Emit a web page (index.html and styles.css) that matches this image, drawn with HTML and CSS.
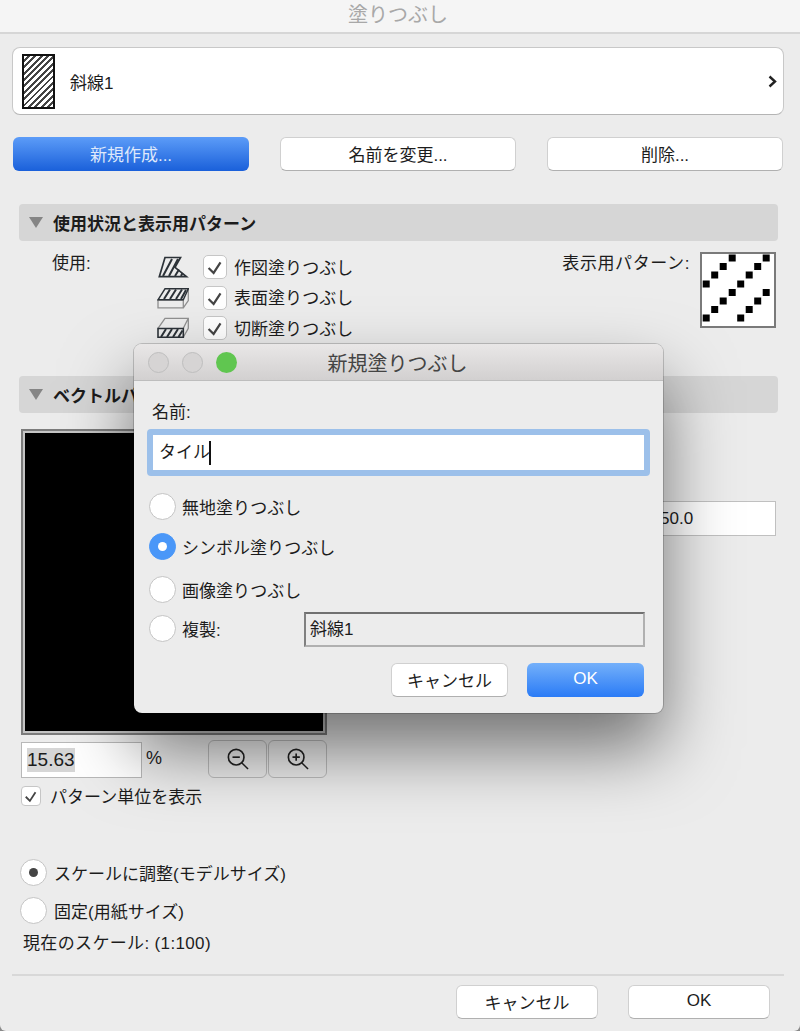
FILE: index.html
```html
<!DOCTYPE html>
<html lang="ja">

<head>
    <meta charset="UTF-8">
    <meta name="viewport" content="width=device-width, initial-scale=1.0">
    <title>塗りつぶし</title>
    <link rel="stylesheet" href="styles.css">
</head>

<body>

    <svg class="defs" width="0" height="0">
        <symbol id="tick" viewBox="0 0 24 24">
            <path d="M5 13 L10.5 18.5 L18 7" fill="none" stroke="#444" stroke-width="2.4" />
        </symbol>
        <symbol id="triangle" viewBox="0 0 14 11">
            <polygon points="0,0 14,0 7,11" fill="#858585" />
        </symbol>
    </svg>

    <div class="window">

        <div class="titlebar">塗りつぶし</div>

        <div class="picker">
            <div class="picker-swatch"></div>
            <span class="picker-name">斜線1</span>
            <svg class="picker-arrow" width="9" height="13" viewBox="0 0 9 13">
                <path d="M1.5 1.5 L7 6.5 L1.5 11.5" fill="none" stroke="#222" stroke-width="2.4" />
            </svg>
        </div>

        <div class="actions">
            <button class="btn btn-primary">新規作成...</button>
            <button class="btn">名前を変更...</button>
            <button class="btn">削除...</button>
        </div>

        <div class="section-head">
            <svg class="section-arrow"><use href="#triangle" /></svg>
            <span>使用状況と表示用パターン</span>
        </div>

        <div class="usage">
            <div class="usage-label">使用:</div>
            <div class="usage-list">
                <div class="usage-row">
                    <svg class="usage-icon" viewBox="0 0 32 22">
                        <path d="M8 1.5 H23.5 L18 11.3 L29.5 20.7 H2.3 Z" fill="none" stroke="#2c3238" stroke-width="1.7" />
                        <path d="M6 20 L15 3 M12 20 L21 3 M18 20 L22 13.5 M24 20 L25.5 17" stroke="#2c3238" stroke-width="2" />
                    </svg>
                    <span class="check"><svg><use href="#tick" /></svg></span>
                    <span class="usage-text">作図塗りつぶし</span>
                </div>
                <div class="usage-row">
                    <svg class="usage-icon" viewBox="0 0 32 22">
                        <path d="M1 13 H26.3 V20.8 H1 Z M26.3 20.8 L31.3 13.5 V2" fill="none" stroke="#909090" stroke-width="1.3" />
                        <path d="M1 12.8 L8 1.8 H31.3 L26.3 12.8 Z" fill="none" stroke="#2c3238" stroke-width="1.4" />
                        <path d="M7 12 L13 2.5 M13 12 L19 2.5 M19 12 L25 2.5 M24 12 L29 3" stroke="#2c3238" stroke-width="2" />
                    </svg>
                    <span class="check"><svg><use href="#tick" /></svg></span>
                    <span class="usage-text">表面塗りつぶし</span>
                </div>
                <div class="usage-row">
                    <svg class="usage-icon" viewBox="0 0 32 22">
                        <path d="M1 11.3 L8 1.3 H31.3 V11.3 L26.3 20.3 M26.3 11.3 L31.3 1.3" fill="none" stroke="#909090" stroke-width="1.3" />
                        <path d="M1 11.5 H26.3 V20.3 H1 Z" fill="none" stroke="#2c3238" stroke-width="1.6" />
                        <path d="M4 20 L9 12 M10 20 L15 12 M16 20 L21 12 M21.5 20 L25.5 13.5" stroke="#2c3238" stroke-width="2" />
                    </svg>
                    <span class="check"><svg><use href="#tick" /></svg></span>
                    <span class="usage-text">切断塗りつぶし</span>
                </div>
            </div>
            <div class="usage-pattern">
                <span class="pattern-label">表示用パターン:</span>
                <svg class="pattern-box" viewBox="0 0 72 72">
                    <g transform="translate(-1.3 -1.5)">
                        <rect x="2" y="62" width="7" height="7" />
                        <rect x="10.5" y="53.5" width="7" height="7" />
                        <rect x="19" y="45" width="7" height="7" />
                        <rect x="28" y="36.5" width="7" height="7" />
                        <rect x="36.5" y="62" width="7" height="7" />
                        <rect x="45" y="53.5" width="7" height="7" />
                        <rect x="53.5" y="45" width="7" height="7" />
                        <rect x="62" y="36.5" width="7" height="7" />
                        <rect x="2" y="28" width="7" height="7" />
                        <rect x="10.5" y="19" width="7" height="7" />
                        <rect x="19" y="10.5" width="7" height="7" />
                        <rect x="28" y="2" width="7" height="7" />
                        <rect x="36.5" y="28" width="7" height="7" />
                        <rect x="45" y="19" width="7" height="7" />
                        <rect x="53.5" y="10.5" width="7" height="7" />
                        <rect x="62" y="2" width="7" height="7" />
                    </g>
                </svg>
            </div>
        </div>

        <div class="section-head">
            <svg class="section-arrow"><use href="#triangle" /></svg>
            <span>ベクトルパターン</span>
        </div>

        <div class="vector">
            <div class="vector-left">
                <div class="canvas"></div>
                <div class="zoom-row">
                    <div class="zoom-input"><span class="selected">15.63</span></div>
                    <span class="zoom-unit">%</span>
                    <div class="zoom-buttons">
                        <button class="zoom-btn">
                            <svg width="22" height="22" viewBox="0 0 24 24">
                                <circle cx="10" cy="10" r="8.5" fill="none" stroke="#222" stroke-width="1.8" />
                                <path d="M6 10 H14" stroke="#222" stroke-width="1.8" />
                                <path d="M16 16 L23 23" stroke="#222" stroke-width="1.6" />
                            </svg>
                        </button>
                        <button class="zoom-btn">
                            <svg width="22" height="22" viewBox="0 0 24 24">
                                <circle cx="10" cy="10" r="8.5" fill="none" stroke="#222" stroke-width="1.8" />
                                <path d="M6 10 H14 M10 6 V14" stroke="#222" stroke-width="1.8" />
                                <path d="M16 16 L23 23" stroke="#222" stroke-width="1.6" />
                            </svg>
                        </button>
                    </div>
                </div>
                <div class="unit-row">
                    <span class="check check-small"><svg><use href="#tick" /></svg></span>
                    <span>パターン単位を表示</span>
                </div>
            </div>
            <div class="vector-value">50.0</div>
        </div>

        <div class="scale">
            <div class="scale-row">
                <span class="radio radio-dark"></span>
                <span>スケールに調整(モデルサイズ)</span>
            </div>
            <div class="scale-row">
                <span class="radio"></span>
                <span>固定(用紙サイズ)</span>
            </div>
            <div class="scale-now">現在のスケール: (1:100)</div>
        </div>

        <div class="footer">
            <button class="btn btn-footer">キャンセル</button>
            <button class="btn btn-footer">OK</button>
        </div>

    </div>

    <div class="modal">
        <div class="modal-title">
            <span class="light"></span>
            <span class="light"></span>
            <span class="light light-green"></span>
            <span class="modal-caption">新規塗りつぶし</span>
        </div>
        <div class="modal-body">
            <div class="modal-label">名前:</div>
            <div class="name-field">タイル<span class="caret"></span></div>

            <div class="modal-options">
                <div class="option">
                    <span class="radio"></span>
                    <span>無地塗りつぶし</span>
                </div>
                <div class="option">
                    <span class="radio radio-blue"></span>
                    <span>シンボル塗りつぶし</span>
                </div>
                <div class="option option-image">
                    <span class="radio"></span>
                    <span>画像塗りつぶし</span>
                </div>
                <div class="option option-copy">
                    <span class="radio"></span>
                    <span class="copy-label">複製:</span>
                    <div class="copy-field">斜線1</div>
                </div>
            </div>

            <div class="modal-buttons">
                <button class="btn btn-modal">キャンセル</button>
                <button class="btn btn-modal btn-ok">OK</button>
            </div>
        </div>
    </div>

</body>

</html>
```

FILE: styles.css
```css
* {
    box-sizing: border-box;
}

body {
    margin: 0;
    background-color: #8a8a8a;
    font-family: "Liberation Sans", "Noto Sans CJK JP", sans-serif;
    font-size: 17px;
    color: #1c1c1c;
    overflow: hidden;
}

.defs {
    position: absolute;
}

.window {
    width: 800px;
    height: 1031px;
    background-color: #ececec;
    border-radius: 0 0 6px 6px;
    overflow: hidden;
}

.titlebar {
    height: 34px;
    padding-right: 4px;
    line-height: 31px;
    text-align: center;
    font-size: 20px;
    color: #a8a8a8;
    background-color: #f5f5f5;
    border-bottom: 2px solid #d6d6d6;
}

.picker {
    display: flex;
    align-items: center;
    height: 68px;
    margin: 13px 16px 0 12px;
    padding: 0 6px 0 9px;
    background-color: #fff;
    border: 1px solid #c8c8c8;
    border-bottom-color: #b4b4b4;
    border-radius: 8px;
}

.picker-swatch {
    width: 33px;
    height: 55px;
    border: 2px solid #111;
    background: repeating-linear-gradient(135deg, #fff 0 2.5px, #444 2.5px 4.5px);
}

.picker-name {
    margin-left: 15px;
    flex: 1;
}

.actions {
    display: grid;
    grid-template-columns: 236px 236px 236px;
    column-gap: 31px;
    margin: 22px 0 0 13px;
}

.btn {
    height: 34px;
    padding: 0 0 2px;
    font-family: inherit;
    font-size: 17px;
    color: #1c1c1c;
    background-color: #fff;
    border: 1px solid #d0d0d0;
    border-bottom-color: #b0b0b0;
    border-radius: 6px;
}

.btn-primary {
    color: #dfe9fb;
    background: linear-gradient(#5c9cf8, #1a60da);
    border: none;
}

.section-head {
    display: flex;
    align-items: center;
    height: 37px;
    margin: 0 22px 0 19px;
    padding-left: 10px;
    font-weight: 700;
    background-color: #d6d6d6;
    border-radius: 4px;
}

.actions + .section-head {
    margin-top: 33px;
}

.section-arrow {
    width: 14px;
    height: 11px;
    margin-right: 10px;
}

.usage {
    display: flex;
    height: 135px;
    padding: 9px 24px 0 52px;
}

.usage-label {
    width: 105px;
    padding-top: 2px;
    line-height: 24px;
}

.usage-list {
    flex: 1;
    display: flex;
    flex-direction: column;
    gap: 6.5px;
    padding-top: 5px;
}

.usage-row {
    display: flex;
    align-items: center;
    height: 24px;
}

.usage-text {
    margin-top: -2px;
}

.usage-icon {
    width: 32px;
    height: 22px;
    margin-right: 14px;
}

.check {
    display: block;
    width: 24px;
    height: 24px;
    margin-right: 7px;
    background-color: #fff;
    border: 1px solid #c6c6c6;
    border-radius: 5px;
}

.check svg {
    display: block;
    width: 100%;
    height: 100%;
}

.usage-pattern {
    display: flex;
    gap: 10px;
    line-height: 24px;
}

.pattern-label {
    margin-top: 2px;
    letter-spacing: 0.6px;
}

.pattern-box {
    display: block;
    width: 76px;
    height: 76px;
    margin-top: 2px;
    background-color: #fff;
    border: 2px solid #7a7a7a;
}

.vector {
    display: flex;
    justify-content: space-between;
    height: 414px;
    padding: 16px 24px 0 21px;
}

.canvas {
    width: 306px;
    height: 306px;
    background-color: #000;
    border: 2px solid #7c7c7c;
    box-shadow: inset 0 0 0 2px #c4c4c4;
}

.zoom-row {
    display: flex;
    align-items: flex-start;
    margin-top: 5px;
}

.zoom-input {
    width: 121px;
    height: 36px;
    margin-top: 2px;
    padding: 5px 0 0 5px;
    font-size: 19px;
    line-height: 24px;
    background-color: #fff;
    border: 1px solid #b8b8b8;
}

.selected {
    display: inline-block;
    background-color: #d6d6d6;
}

.zoom-unit {
    width: 66px;
    padding: 8px 0 0 4px;
    font-size: 18px;
}

.zoom-buttons {
    display: flex;
    gap: 1px;
}

.zoom-btn {
    display: flex;
    align-items: center;
    justify-content: center;
    width: 59px;
    height: 38px;
    padding: 0;
    background-color: #ececec;
    border: 1px solid #bcbcbc;
    border-radius: 6px;
}

.unit-row {
    display: flex;
    align-items: center;
    margin-top: 5px;
}

.check-small {
    width: 20px;
    height: 20px;
    margin-right: 9px;
    border-radius: 4px;
}

.vector-value {
    width: 126px;
    height: 35px;
    margin-top: 72px;
    padding-left: 9px;
    line-height: 33px;
    background-color: #fff;
    border: 1px solid #c0c0c0;
}

.scale {
    height: 116px;
    margin-top: 31px;
    padding-left: 20px;
}

.scale-row {
    display: flex;
    align-items: center;
    gap: 7px;
    height: 28px;
}

.scale-row + .scale-row {
    margin-top: 10px;
}

.radio {
    position: relative;
    display: block;
    flex: none;
    width: 27px;
    height: 27px;
    background-color: #fff;
    border: 1px solid #c4c4c4;
    border-radius: 50%;
}

.radio-dark::after,
.radio-blue::after {
    content: "";
    position: absolute;
    top: 8px;
    left: 8px;
    width: 9px;
    height: 9px;
    border-radius: 50%;
    background-color: #444;
}

.radio-blue {
    background-color: #4a97f8;
    border-color: #4a97f8;
}

.radio-blue::after {
    background-color: #fff;
}

.scale-now {
    margin: 8px 0 0 3px;
    line-height: 24px;
    letter-spacing: 0.35px;
}

.footer {
    display: flex;
    gap: 30px;
    justify-content: flex-end;
    margin: 0 16px 0 12px;
    padding: 9px 14px 0 0;
    border-top: 2px solid #d8d8d8;
}

.btn-footer {
    width: 142px;
}

/* dialog on top of the window */
.modal {
    position: absolute;
    top: 344px;
    left: 134px;
    width: 529px;
    height: 369px;
    background-color: #ececec;
    border-radius: 8px;
    box-shadow: 0 0 0 1px rgba(0, 0, 0, 0.18), 0 36px 70px rgba(0, 0, 0, 0.52);
}

.modal-title {
    position: relative;
    display: flex;
    align-items: center;
    gap: 13px;
    height: 37px;
    padding-left: 14px;
    background: linear-gradient(#e9e7e7, #d2d0d0);
    border-bottom: 1px solid #bdbdbd;
    border-radius: 8px 8px 0 0;
}

.light {
    width: 21px;
    height: 21px;
    background-color: #d6d4d4;
    border: 1px solid #bebebe;
    border-radius: 50%;
}

.light-green {
    background-color: #60c650;
    border: none;
}

.modal-caption {
    position: absolute;
    left: 0;
    right: 2px;
    text-align: center;
    font-size: 20px;
    color: #444;
}

.modal-body {
    padding: 19px 13px 0 13px;
}

.modal-label {
    margin-left: 5px;
    line-height: 26px;
}

.name-field {
    display: flex;
    align-items: center;
    height: 47px;
    margin-top: 3px;
    padding-left: 6px;
    line-height: 24px;
    background-color: #fff;
    border: 6px solid #9cc0ea;
    border-radius: 4px;
}

.caret {
    width: 1.5px;
    height: 24px;
    margin-left: -1px;
    background-color: #111;
}

.modal-options {
    display: flex;
    flex-direction: column;
    gap: 13px;
    margin-top: 17px;
    padding-left: 2px;
}

.option {
    display: flex;
    align-items: center;
    gap: 6px;
    height: 27px;
}

.option-image {
    margin-top: 3px;
}

.option-copy {
    margin-top: -1px;
}

.copy-label {
    width: 116px;
}

.copy-field {
    width: 341px;
    height: 35px;
    margin-top: 2px;
    padding-left: 4px;
    line-height: 31px;
    border: 2px solid #b0b0b0;
    border-top-color: #707070;
    border-left-color: #808080;
}

.modal-buttons {
    display: flex;
    justify-content: flex-end;
    gap: 19px;
    margin-top: 21px;
    margin-right: 6px;
}

.btn-modal {
    width: 117px;
}

.btn-ok {
    color: #fff;
    background: linear-gradient(#74b0fa, #2a7bf6);
    border: none;
}
```
